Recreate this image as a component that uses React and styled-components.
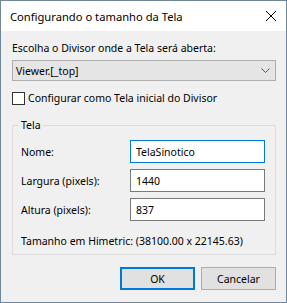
import React from 'react';
import styled, { createGlobalStyle } from 'styled-components';

// -------------- CSS Style -------------- //
const GlobalStyle = createGlobalStyle`
    body {
        margin: 0;
        background: #fff;
        font-family: "Noto Sans", "Liberation Sans", sans-serif;
    }
`;

const Window = styled.div`
    width: 287px;
    height: 303px;
    box-sizing: border-box;
    border: 1px solid #6f8796;
    background: #f0f0f0;
    display: flex;
    flex-direction: column;
`;

const TitleBar = styled.div`
    height: 30px;
    flex-shrink: 0;
    background: #fff;
    display: flex;
    align-items: center;
    justify-content: space-between;
    padding: 0 10px 0 9px;
    font-size: 11.2px;
    color: #000;
`;

const Body = styled.div`
    flex: 1;
    display: flex;
    flex-direction: column;
    padding: 10px 10px 11px 11px;
    font-size: 10.5px;
    color: #000;
`;

const Label = styled.div`
    line-height: 14px;
    margin-bottom: 5px;
`;

const Select = styled.div`
    height: 21px;
    box-sizing: border-box;
    border: 1px solid #adadad;
    background: #e5e5e5;
    display: flex;
    align-items: center;
    justify-content: space-between;
    padding: 0 5px 0 3px;
`;

const CheckRow = styled.label`
    margin-top: 11px;
    height: 13px;
    display: flex;
    align-items: center;
    gap: 3px;
    line-height: 13px;
`;

const CheckBox = styled.span`
    width: 13px;
    height: 13px;
    box-sizing: border-box;
    border: 1px solid #333;
    background: #fff;
`;

const Group = styled.fieldset`
    margin: 13px 0 0;
    padding: 8px 10px 6px 8px;
    border: 1px solid #dcdcdc;
    min-width: 0;
`;

const Legend = styled.legend`
    padding: 0 2px;
    margin-left: -2px;
    line-height: 14px;
`;

const Form = styled.div`
    display: grid;
    grid-template-columns: 109px 135px;
    row-gap: 6px;
    align-items: center;
`;

const Input = styled.div`
    height: 23px;
    box-sizing: border-box;
    border: 1px solid ${p => (p.focused ? '#0078d7' : '#7a7a7a')};
    background: #fff;
    display: flex;
    align-items: center;
    padding-left: 5px;
`;

const Info = styled.div`
    margin-top: 13px;
    line-height: 14px;
`;

const Buttons = styled.div`
    margin-top: 12px;
    display: flex;
    justify-content: flex-end;
    gap: 6px;
`;

const Button = styled.button`
    width: 75px;
    height: 23px;
    box-sizing: border-box;
    margin: 0;
    padding: 0;
    font: inherit;
    color: #000;
    background: #e1e1e1;
    border: ${p => (p.primary ? '2px solid #0078d7' : '1px solid #adadad')};
`;

const App = () => {
    return (
        <>
            <GlobalStyle />
            <Window>
                <TitleBar>
                    <span>Configurando o tamanho da Tela</span>
                    <svg width="10" height="10" viewBox="0 0 10 10">
                        <path d="M0 0L10 10M10 0L0 10" stroke="#000" strokeWidth="1" />
                    </svg>
                </TitleBar>
                <Body>
                    <Label>Escolha o Divisor onde a Tela será aberta:</Label>
                    <Select>
                        <span>Viewer.[_top]</span>
                        <svg width="9" height="5" viewBox="0 0 9 5">
                            <polyline points="0.5,0.5 4.5,4.5 8.5,0.5" fill="none" stroke="#555" strokeWidth="1" />
                        </svg>
                    </Select>
                    <CheckRow>
                        <CheckBox />
                        <span>Configurar como Tela inicial do Divisor</span>
                    </CheckRow>
                    <Group>
                        <Legend>Tela</Legend>
                        <Form>
                            <span>Nome:</span>
                            <Input focused>TelaSinotico</Input>
                            <span>Largura (pixels):</span>
                            <Input>1440</Input>
                            <span>Altura (pixels):</span>
                            <Input>837</Input>
                        </Form>
                        <Info>Tamanho em Himetric: (38100.00 x 22145.63)</Info>
                    </Group>
                    <Buttons>
                        <Button primary>OK</Button>
                        <Button>Cancelar</Button>
                    </Buttons>
                </Body>
            </Window>
        </>
    );
};

export default App;
